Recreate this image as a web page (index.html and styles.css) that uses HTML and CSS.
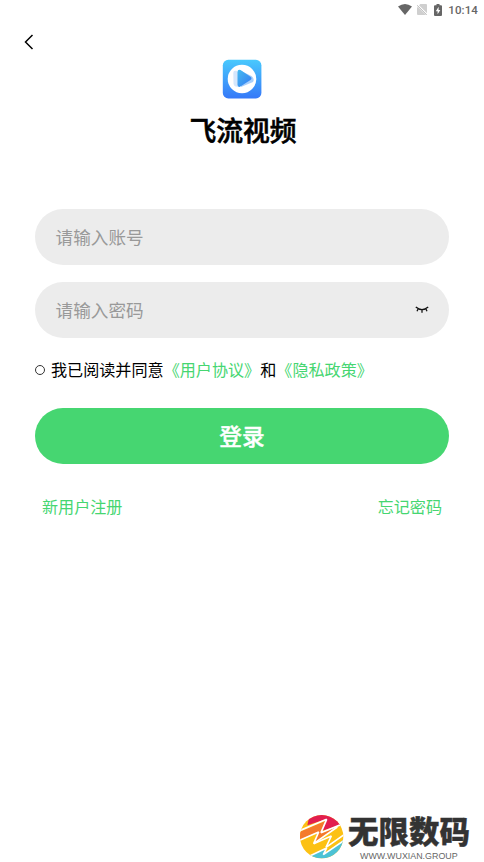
FILE: index.html
```html
<!DOCTYPE html>
<html lang="zh-CN">
<head>
<meta charset="UTF-8">
<title>飞流视频</title>
<link rel="stylesheet" href="styles.css">
</head>
<body>
<div class="screen">
  <header class="status">
    <svg width="14" height="11" viewBox="0 0 14 11"><path d="M0 2.600Q7-2.400 14 2.600L7 11Z" fill="#666"/></svg>
    <svg class="sim" width="10" height="11" viewBox="0 0 10 11"><path d="M3.300 0H9a1 1 0 0 1 1 1v9a1 1 0 0 1-1 1H1a1 1 0 0 1-1-1V3.500Z" fill="#cfcfcf"/><path d="M0 .8 10 10.600" stroke="#fff" stroke-width="2"/><path d="M0 1.200 9.600 10.800" stroke="#aaa" stroke-width=".9"/></svg>
    <svg class="battery" width="8" height="12" viewBox="0 0 8 12"><path d="M2.500 0h3v1.200H7a1 1 0 0 1 1 1V11a1 1 0 0 1-1 1H1a1 1 0 0 1-1-1V2.200a1 1 0 0 1 1-1h1.500Z" fill="#666"/><path d="M4.600 2.800 1.800 7.200h1.800v3L6.300 6H4.600Z" fill="#fff"/></svg>
    <span class="time">10:14</span>
  </header>
  <nav class="nav">
    <svg width="10" height="16" viewBox="0 0 10 16"><path d="M8.500 1 1.500 8l7 7" fill="none" stroke="#000" stroke-width="1.500"/></svg>
  </nav>
  <section class="brand">
    <svg width="40" height="40" viewBox="0 0 40 40">
      <defs>
        <linearGradient id="tile" x1="0" y1="0" x2="0" y2="1"><stop offset="0" stop-color="#49c9fd"/><stop offset="1" stop-color="#3679f8"/></linearGradient>
        <linearGradient id="play" x1="0" y1="0" x2="1" y2="1"><stop offset="0" stop-color="#45bbef"/><stop offset="1" stop-color="#347af4"/></linearGradient>
      </defs>
      <rect x=".8" y=".8" width="38.600" height="38.600" rx="5.500" fill="url(#tile)"/>
      <circle cx="20" cy="20" r="14.300" fill="#fff"/>
      <path d="M11.300 14q0-3 3-2.200L27 20q2 1.500 0 3l-10 4.500q-5 1-5.500-3Z" fill="#d5e7fc"/>
      <path d="M19 12l10.500 5q3.500 3 1.500 6L19 28Z" fill="#a9cffb"/>
      <path d="M15.500 13q0-3 3-2L28.500 17.800q2 1.600 0 3.200L18 27.800q-2.500.5-2.500-2Z" fill="url(#play)"/>
    </svg>
    <h1 class="title">飞流视频</h1>
  </section>
  <main class="form">
    <div class="field"><span>请输入账号</span></div>
    <div class="field"><span>请输入密码</span>
      <svg width="14" height="8" viewBox="0 0 14 8"><path d="M.8 1Q7 6.200 13.200 1M3.200 2.800 2 5.200M10.800 2.800 12 5.200M7 3.600V6.800" fill="none" stroke="#111" stroke-width="1.300"/></svg>
    </div>
    <div class="agree"><i class="radio"></i><p>我已阅读并同意<a>《用户协议》</a>和<a>《隐私政策》</a></p></div>
    <button class="login">登录</button>
    <div class="links"><a>新用户注册</a><a>忘记密码</a></div>
  </main>
  <footer class="mark">
    <svg width="46" height="48" viewBox="6 6 138 144">
      <defs><clipPath id="disc"><circle cx="77" cy="80" r="65"/></clipPath></defs>
      <g clip-path="url(#disc)">
        <path d="M0 0H150V150H0Z" fill="#fcc114"/>
        <path d="M42 10H150V40L78 62 92 27 34 46Z" fill="#e21e4f"/>
        <path d="M6 68 90 32 74 70 122 51 52 100 66 66 6 92Z" fill="#f47a2b"/>
        <path d="M30 143 92 114 82 134 150 84V150H30Z" fill="#4cc2d5"/>
        <g fill="none" stroke="#fff" stroke-width="5" stroke-linejoin="bevel">
          <path d="M6 64 92 28 75 68 144 40"/>
          <path d="M6 93 68 66 53 101 124 51"/>
          <path d="M53 101 106 78 90 112 146 73"/>
          <path d="M30 143 92 114 82 134 146 90"/>
        </g>
      </g>
    </svg>
    <div class="words"><div class="name">无限数码</div><div class="url">WWW.WUXIAN.GROUP</div></div>
  </footer>
</div>
</body>
</html>
```
FILE: styles.css
```css
* { box-sizing: border-box; }
body {
  margin: 0;
  background: #fff;
  color: #000;
  font-family: "Noto Sans CJK SC", sans-serif;
}
.screen {
  height: 862px;
  display: flex;
  flex-direction: column;
  overflow: hidden;
}
svg { display: block; flex: none; }
.status {
  height: 19px;
  display: flex;
  align-items: center;
  justify-content: flex-end;
  padding-right: 6px;
}
.sim { margin-left: 5px; }
.battery { margin-left: 7px; }
.time {
  margin-left: 6px;
  padding-top: 1px;
  font: 500 11.500px/19px Roboto, sans-serif;
  letter-spacing: .1px;
  color: #666;
}
.nav {
  height: 40px;
  padding: 15px 0 0 23.500px;
}
.brand {
  display: flex;
  flex-direction: column;
  align-items: center;
}
.title {
  margin: 11px 0 0;
  font-size: 26.800px;
  line-height: 40px;
  font-weight: 500;
  -webkit-text-stroke: .6px #000;
  padding-left: 2px;
}
.form { padding: 59px 35px 0; }
.field {
  height: 56px;
  margin-bottom: 17px;
  padding: 0 20px 0 20.600px;
  display: flex;
  align-items: center;
  justify-content: space-between;
  border-radius: 28px;
  background: #ececec;
  color: #999;
  font-size: 17.600px;
}
.field span { padding-bottom: 1px; }
.agree {
  height: 30px;
  display: flex;
  align-items: center;
  font-size: 16.100px;
}
.agree p { margin: 0 0 0 6px; padding-bottom: 2px; }
.agree a, .links a { color: #46d671; }
.radio {
  width: 10px;
  height: 10px;
  border: 1px solid #333;
  border-radius: 50%;
}
.login {
  display: block;
  width: 100%;
  height: 56px;
  margin-top: 23px;
  padding: 0 0 2px;
  border: 0;
  border-radius: 28px;
  background: #46d671;
  color: #fff;
  font: 500 22.700px "Noto Sans CJK SC", sans-serif;
  -webkit-text-stroke: .4px #fff;
}
.links {
  display: flex;
  justify-content: space-between;
  padding: 30px 7px 0;
  font-size: 16.100px;
  line-height: 24px;
}
.mark {
  margin-top: auto;
  margin-left: 298px;
  height: 50px;
  display: flex;
}
.words { margin-left: 4px; }
.name {
  height: 39px;
  font-size: 30.500px;
  line-height: 36px;
  font-weight: 900;
  color: #333;
  -webkit-text-stroke: .4px #333;
}
.url {
  margin-left: 12px;
  font: 8.900px/11px "Liberation Sans", sans-serif;
  color: #666;
  white-space: nowrap;
}
```
